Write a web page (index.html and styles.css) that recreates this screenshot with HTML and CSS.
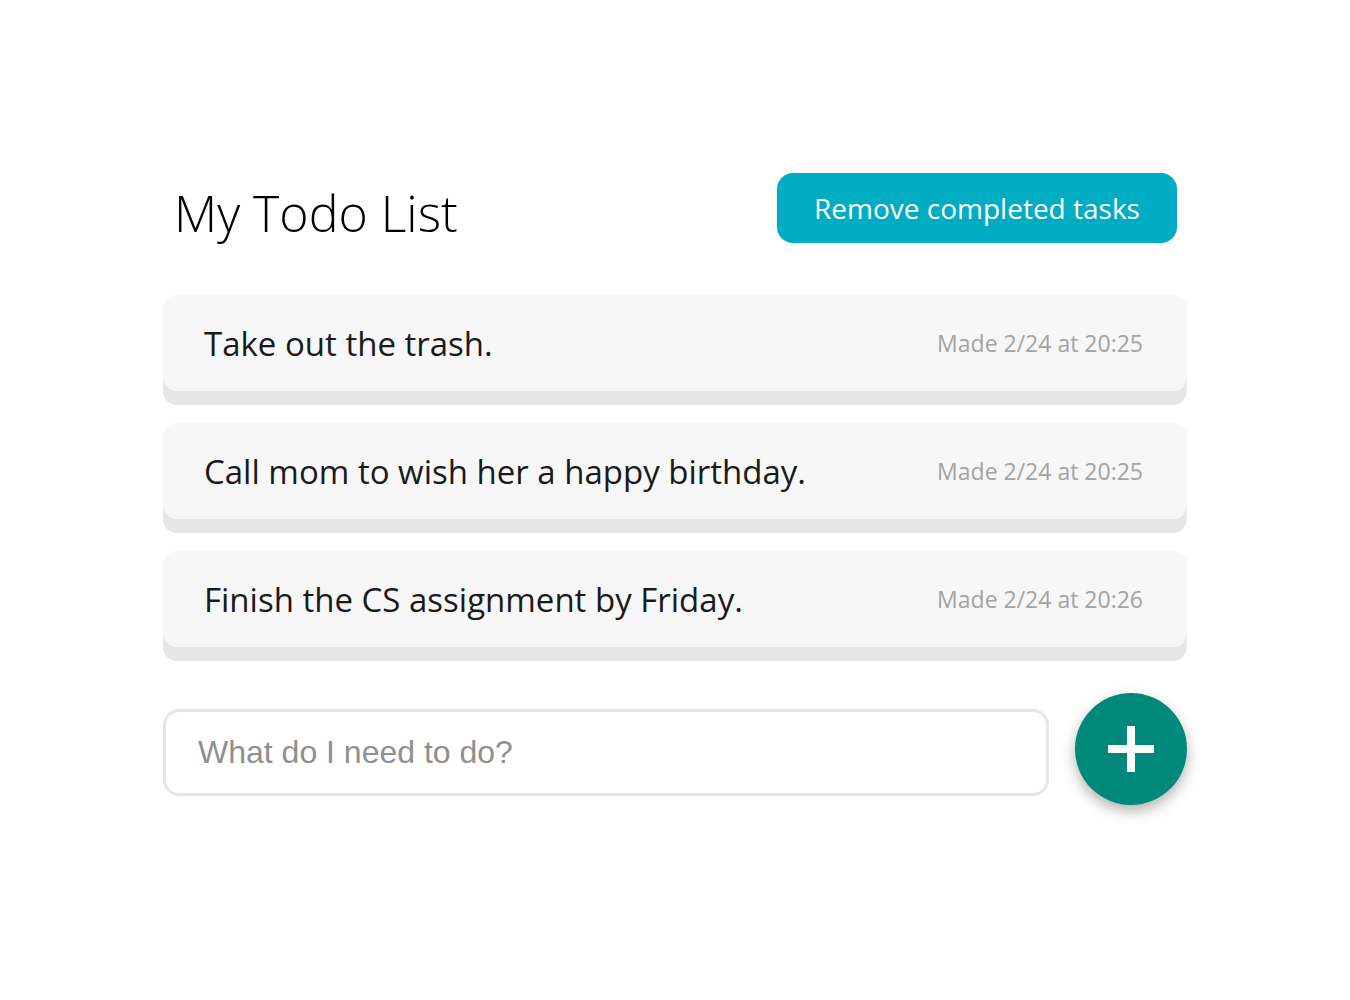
FILE: index.html
```html
<!DOCTYPE html>
<html lang="en">
<head>
<meta charset="utf-8">
<title>My Todo List</title>
<link rel="stylesheet" href="styles.css">
</head>
<body>
<main class="app">
  <header class="header">
    <h1 class="title">My Todo List</h1>
    <button class="remove-btn" type="button">Remove completed tasks</button>
  </header>
  <ul class="list">
    <li class="item"><span class="item-text">Take out the trash.</span><span class="item-date">Made 2/24 at 20:25</span></li>
    <li class="item"><span class="item-text">Call mom to wish her a happy birthday.</span><span class="item-date">Made 2/24 at 20:25</span></li>
    <li class="item"><span class="item-text">Finish the CS assignment by Friday.</span><span class="item-date">Made 2/24 at 20:26</span></li>
  </ul>
  <form class="add-form">
    <input class="add-input" type="text" placeholder="What do I need to do?">
    <button class="add-btn" type="button" aria-label="Add">
      <svg class="plus" width="46" height="46" viewBox="0 0 46 46"><path d="M19 0h8v46h-8z M0 19h46v8H0z" fill="#fff"/></svg>
    </button>
  </form>
</main>
</body>
</html>
```
FILE: styles.css
```css
* { box-sizing: border-box; }
html, body { margin: 0; padding: 0; background: #fff; }
body { font-family: "Open Sans", "Noto Sans", sans-serif; color: #111; }
.app { width: 1024px; margin: 0 auto; padding-top: 173px; padding-bottom: 40px; }
.header { display: flex; justify-content: space-between; align-items: center; padding: 0 10px 0 11px; height: 70px; }
.title { margin: 0; font-weight: 300; font-size: 50px; color: #000; line-height: 1; position: relative; top: 5px; }
.remove-btn { width: 400px; height: 70px; border: none; border-radius: 16px; background: #00acc1; color: #fff; font-family: inherit; font-size: 28px; font-weight: 400; padding: 0; }
.list { list-style: none; margin: 52px 0 0; padding: 0; display: flex; flex-direction: column; gap: 32px; }
.item { height: 96px; background: #f7f7f7; border-radius: 14px; box-shadow: 0 14px 0 #e6e6e6; display: flex; align-items: center; justify-content: space-between; padding: 0 44px 0 41px; }
.item-text { font-size: 33px; color: #1a1a1a; }
.item-date { font-size: 23px; color: #a3a3a3; }
.add-form { display: flex; align-items: center; justify-content: space-between; margin: 46px 0 0; }
.add-input { width: 886px; height: 87px; border: 3px solid #e6e6e6; border-radius: 16px; padding: 0 32px; font-family: "Liberation Sans", Arial, sans-serif; font-size: 32px; color: #333; outline: none; margin-top: 7px; }
.add-input::placeholder { color: #8f8f8f; }
.add-btn { width: 112px; height: 112px; border-radius: 50%; border: none; background: #00897b; display: flex; align-items: center; justify-content: center; box-shadow: 0 6px 14px rgba(0,0,0,0.3); padding: 0; flex: none; }
.plus { display: block; }
```
